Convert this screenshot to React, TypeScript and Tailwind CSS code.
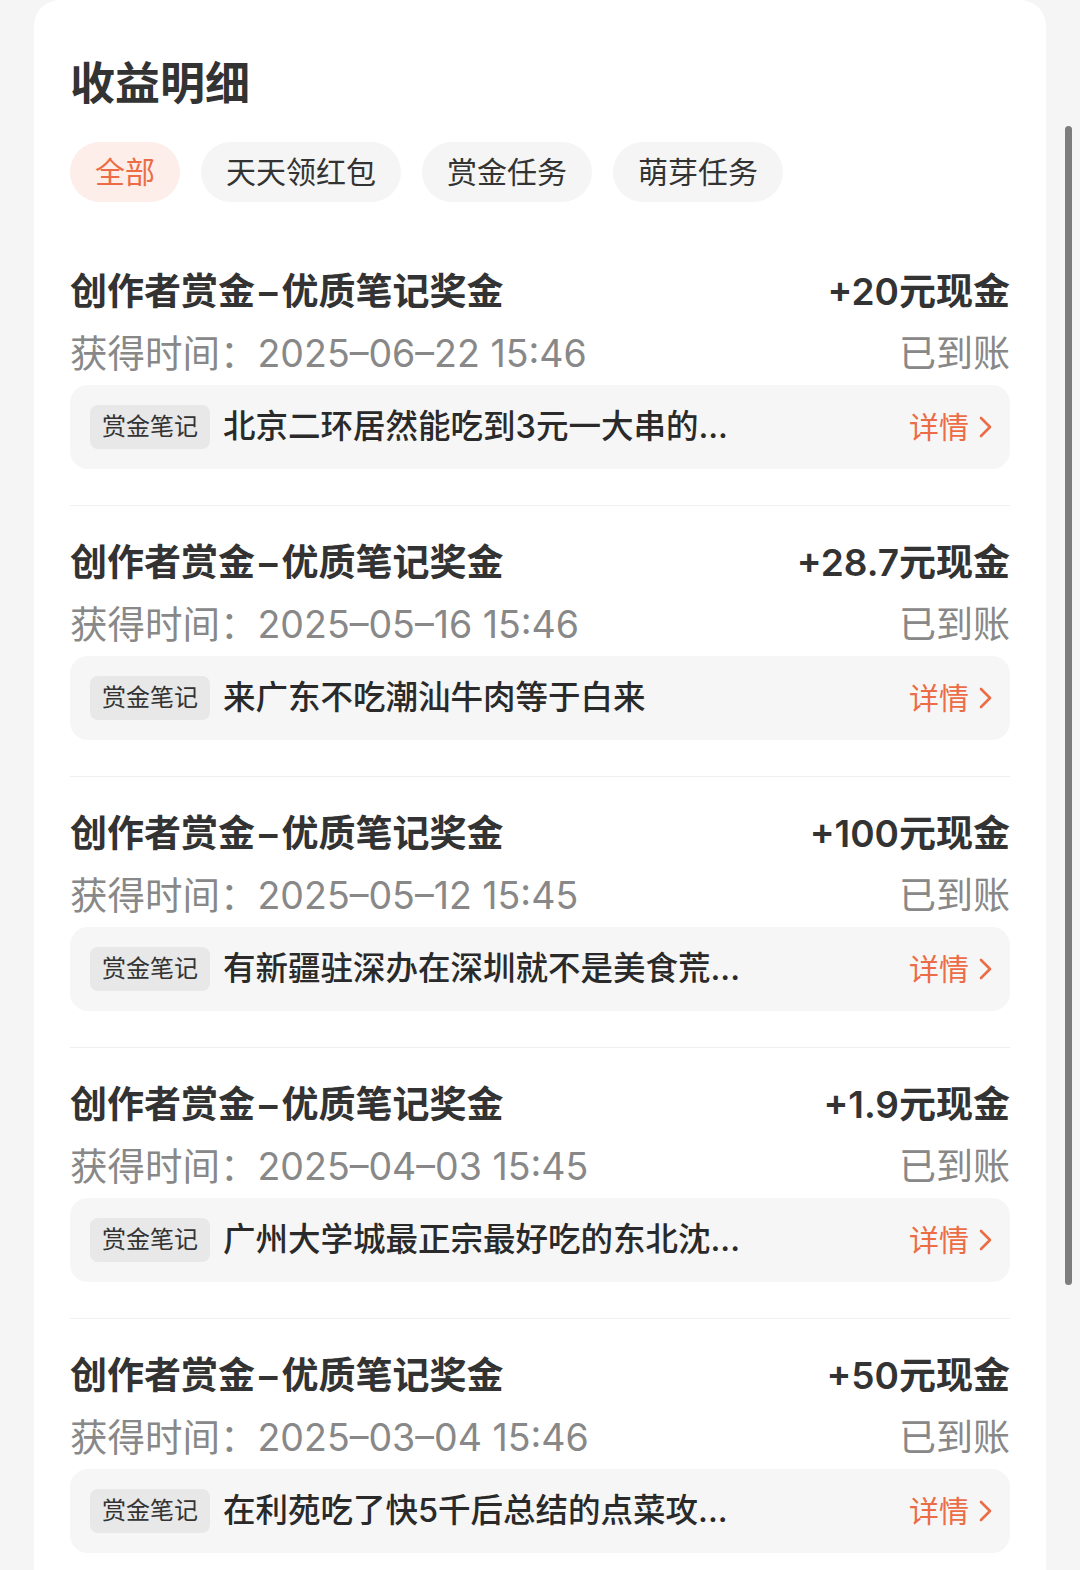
import React from "react";

const items = [
  { amount: "+20元现金", time: "2025–06–22 15:46", note: "北京二环居然能吃到3元一大串的..." },
  { amount: "+28.7元现金", time: "2025–05–16 15:46", note: "来广东不吃潮汕牛肉等于白来" },
  { amount: "+100元现金", time: "2025–05–12 15:45", note: "有新疆驻深办在深圳就不是美食荒..." },
  { amount: "+1.9元现金", time: "2025–04–03 15:45", note: "广州大学城最正宗最好吃的东北沈..." },
  { amount: "+50元现金", time: "2025–03–04 15:46", note: "在利苑吃了快5千后总结的点菜攻..." },
];

const tabs = ["全部", "天天领红包", "赏金任务", "萌芽任务"];

function Chevron() {
  return (
    <svg width="17" height="26" viewBox="0 0 17 26" className="ml-[8px]">
      <path d="M4 4 L13 13 L4 22" fill="none" stroke="#ec6d45" strokeWidth="2.6" strokeLinecap="round" strokeLinejoin="round" />
    </svg>
  );
}

export default function App() {
  return (
    <div
      className="relative w-[1080px] h-[1570px] overflow-hidden bg-[#f5f5f5]"
      style={{ fontFamily: 'Inter, "Noto Sans CJK SC", sans-serif' }}
    >
      <div className="mx-[34px] h-full bg-white rounded-t-[26px] px-[36px] pt-[56px]">
        <h1 className="text-[45px] leading-[56px] font-bold text-[#333]">收益明细</h1>
        <div className="mt-[30px] flex gap-[21px]">
          {tabs.map((t, i) => (
            <div
              key={t}
              className={
                i === 0
                  ? "h-[60px] px-[25px] rounded-full bg-[#fdeee9] text-[#ec6d45] text-[30px] flex items-center"
                  : "h-[60px] px-[25px] rounded-full bg-[#f5f5f5] text-[#333] text-[30px] flex items-center"
              }
            >
              {t}
            </div>
          ))}
        </div>
        <div className="mt-[33px]">
          {items.map((it, i) => (
            <div key={i} className="pt-[26px] pb-[36px] border-b border-[#f0f0f0]">
              <div className="h-[62px] flex items-center justify-between text-[37px] font-semibold text-[#333]">
                <span>
                  创作者赏金<span className="mx-[4px]">–</span>优质笔记奖金
                </span>
                <span>{it.amount}</span>
              </div>
              <div className="h-[62px] flex items-center justify-between text-[37.5px] text-[#888]">
                <span>获得时间：{it.time}</span>
                <span className="text-[37px]">已到账</span>
              </div>
              <div className="h-[84px] rounded-[18px] bg-[#f6f6f6] pl-[20px] pr-[16px] flex items-center">
                <span className="h-[44px] px-[12px] rounded-[8px] bg-[#e8e8e8] text-[24px] text-[#333] flex items-center shrink-0">
                  赏金笔记
                </span>
                <span className="ml-[13px] flex-1 min-w-0 truncate text-[32.5px] font-medium text-[#2a2a2a]">{it.note}</span>
                <span className="flex items-center text-[30px] text-[#ec6d45] shrink-0">
                  详情
                  <Chevron />
                </span>
              </div>
            </div>
          ))}
        </div>
      </div>
      <div className="absolute left-[1065px] top-[126px] w-[7px] h-[1159px] rounded-full bg-[#7d7d7d]" />
    </div>
  );
}
